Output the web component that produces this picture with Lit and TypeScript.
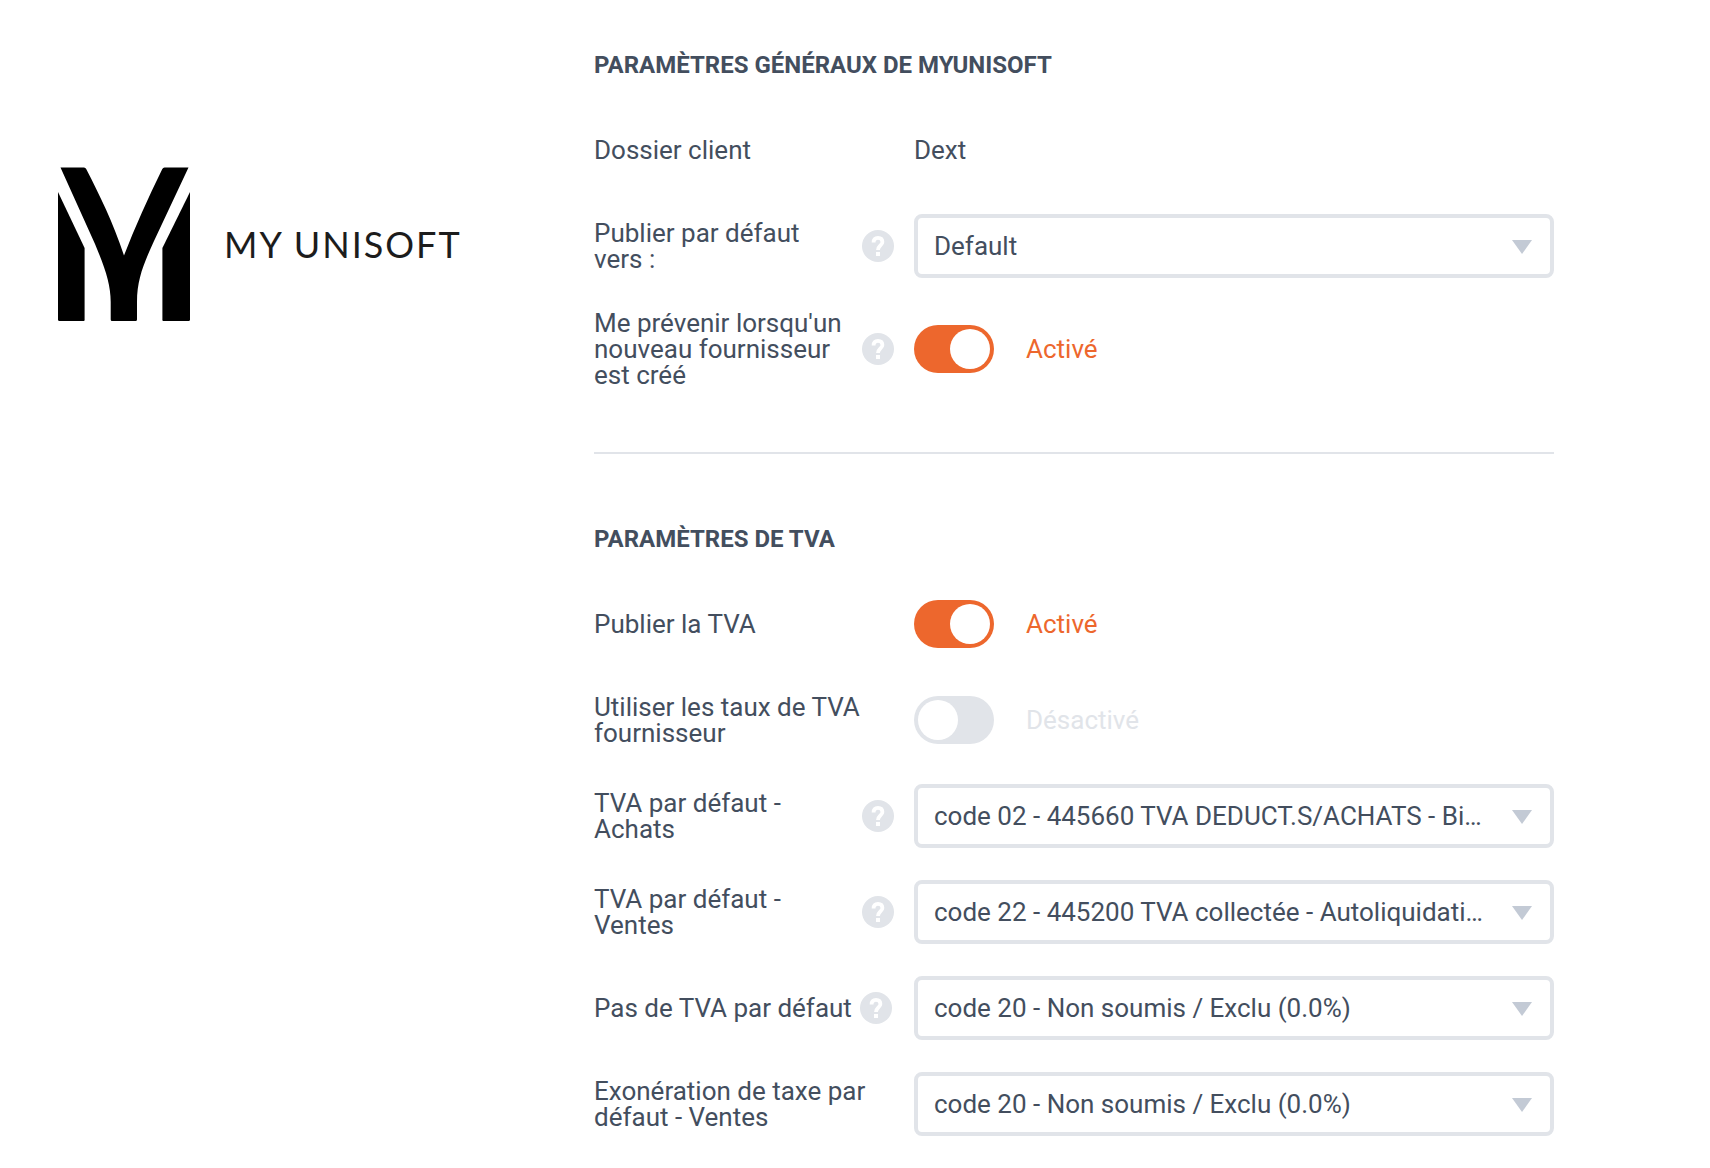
import { LitElement, html, css, svg, nothing } from "lit";
import { customElement, property, state } from "lit/decorators.js";

type Field =
  | { kind: "text"; id: string; label: string; value: string }
  | { kind: "select"; id: string; label: string; help?: string; options: string[] }
  | { kind: "toggle"; id: string; label: string; help?: string; on: boolean };

interface Section {
  title: string;
  fields: Field[];
}

const EXCLU = "code 20 - Non soumis / Exclu (0.0%)";
const ACHATS = "code 02 - 445660 TVA DEDUCT.S/ACHATS - Biens (20.0%)";
const VENTES = "code 22 - 445200 TVA collectée - Autoliquidation (20.0%)";

const SECTIONS: Section[] = [
  {
    title: "PARAMÈTRES GÉNÉRAUX DE MYUNISOFT",
    fields: [
      { kind: "text", id: "client", label: "Dossier client", value: "Dext" },
      { kind: "select", id: "publish", label: "Publier par défaut vers :", help: "Aide", options: ["Default"] },
      { kind: "toggle", id: "notify", label: "Me prévenir lorsqu'un nouveau fournisseur est créé", help: "Aide", on: true },
    ],
  },
  {
    title: "PARAMÈTRES DE TVA",
    fields: [
      { kind: "toggle", id: "vat", label: "Publier la TVA", on: true },
      { kind: "toggle", id: "rates", label: "Utiliser les taux de TVA fournisseur", on: false },
      { kind: "select", id: "purchases", label: "TVA par défaut - Achats", help: "Aide", options: [ACHATS, EXCLU] },
      { kind: "select", id: "sales", label: "TVA par défaut - Ventes", help: "Aide", options: [VENTES, EXCLU] },
      { kind: "select", id: "none", label: "Pas de TVA par défaut", help: "Aide", options: [EXCLU] },
      { kind: "select", id: "exempt", label: "Exonération de taxe par défaut - Ventes", options: [EXCLU] },
    ],
  },
];

@customElement("brand-logo")
export class BrandLogo extends LitElement {
  static styles = css`
    :host {
      display: flex;
      align-items: center;
      gap: 32px;
      color: #000;
    }
    .mark {
      display: block;
      flex: none;
    }
    .name {
      font: 400 36px/48px Lato, sans-serif;
      letter-spacing: 2px;
      color: #1c1c1c;
      white-space: nowrap;
    }
  `;

  render() {
    return html`
      <svg class="mark" width="136" height="156" viewBox="0 0 136 156" fill="currentColor" aria-hidden="true">
        <path d="M2 26 L28.600 82 V154 Q28.600 155 27.600 155 H3.500 Q2 155 2 153.500 Z" />
        <path d="M134 26 L106.400 82 V154 Q106.400 155 107.400 155 H132.500 Q134 155 134 153.500 Z" />
        <path
          d="M4.500 1.500 H28 Q29.500 1.500 30.200 3 C44 30 57 56 68 89.500 C79 61 92 32 106.300 3 Q107 1.500 108.500 1.500 H132.500 L98 75 C88 97 81 113 81 136 V153.500 Q81 155 79.500 155 H56 Q54.700 155 54.700 153.500 V136 C54.700 118 49 102 39 78 Z"
        />
      </svg>
      <span class="name">MY UNISOFT</span>
    `;
  }
}

@customElement("help-button")
export class HelpButton extends LitElement {
  @property() label = "";

  static styles = css`
    :host {
      display: block;
      flex: none;
    }
    .help {
      display: block;
      padding: 0;
      border: 0;
      background: none;
      cursor: pointer;
    }
    .icon {
      display: block;
    }
  `;

  render() {
    return html`
      <button class="help" type="button" aria-label=${this.label}>
        <svg class="icon" width="32" height="32" viewBox="0 0 32 32" aria-hidden="true">
          <circle cx="16" cy="16" r="16" fill="#e1e4e9" />
          <path d="M11.600 12.400 C11.600 9.300 13.400 7.800 16 7.800 C18.700 7.800 20.400 9.400 20.400 11.900 C20.400 15.300 16 15.600 16 20" fill="none" stroke="#fff" stroke-width="3.800" />
          <rect x="14" y="22" width="4" height="4" fill="#fff" />
        </svg>
      </button>
    `;
  }
}

@customElement("app-root")
export class AppRoot extends LitElement {
  @state() private toggles: Record<string, boolean> = Object.fromEntries(
    SECTIONS.flatMap((s) => s.fields).flatMap((f) => (f.kind === "toggle" ? [[f.id, f.on]] : [])),
  );

  static styles = css`
    :host {
      display: block;
      box-sizing: border-box;
      min-height: 100vh;
      background: #fff;
      color: #434e5e;
      font: 400 26px/26px Roboto, "Liberation Sans", sans-serif;
    }
    .page {
      display: grid;
      grid-template-columns: minmax(0, 538fr) minmax(0, 960fr);
      padding: 28px 156px 16px 56px;
    }
    .brand {
      padding-top: 138px;
    }
    .section + .section {
      margin-top: 48px;
      padding-top: 48px;
      border-top: 2px solid #e1e4e9;
    }
    .title {
      margin: 0;
      padding: 24px 0;
      font-size: 24px;
      line-height: 26px;
      font-weight: 700;
    }
    .row {
      display: grid;
      grid-template-columns: minmax(0, 1fr) minmax(0, 2fr);
      align-items: center;
      min-height: 64px;
      padding: 16px 0;
    }
    .caption {
      display: flex;
      align-items: center;
      gap: 8px;
      padding-right: 20px;
    }
    .picker {
      display: grid;
      align-items: center;
    }
    .select {
      grid-area: 1 / 1;
      width: 100%;
      height: 64px;
      padding: 0 64px 0 16px;
      border: 4px solid #e1e4e9;
      border-radius: 8px;
      background: #fff;
      color: inherit;
      font: inherit;
      line-height: 32px;
      appearance: none;
      overflow: hidden;
      text-overflow: ellipsis;
      white-space: nowrap;
      cursor: pointer;
    }
    .arrow {
      grid-area: 1 / 1;
      justify-self: end;
      margin: 2px 22px 0 0;
      pointer-events: none;
    }
    .switch {
      display: flex;
      align-items: center;
      gap: 32px;
    }
    .toggle {
      flex: none;
      display: block;
      box-sizing: border-box;
      width: 80px;
      height: 48px;
      margin: 0;
      padding: 4px;
      border-radius: 24px;
      background: #e1e4e9;
      appearance: none;
      cursor: pointer;
    }
    .toggle::before {
      content: "";
      display: block;
      width: 40px;
      height: 40px;
      border-radius: 50%;
      background: #fff;
    }
    .toggle:checked {
      background: #ed672d;
    }
    .toggle:checked::before {
      margin-left: auto;
    }
    .status {
      color: #e1e4e9;
    }
    .toggle:checked + .status {
      color: #ed672d;
    }
  `;

  private control(f: Field) {
    if (f.kind === "text") return html`<span>${f.value}</span>`;
    if (f.kind === "select") {
      return html`
        <div class="picker">
          <select class="select" id=${f.id}>
            ${f.options.map((o) => html`<option>${o}</option>`)}
          </select>
          <svg class="arrow" width="20" height="14" viewBox="0 0 20 14" aria-hidden="true">
            ${svg`<path d="M0 0H20L10 14Z" fill="#c3cad5" />`}
          </svg>
        </div>
      `;
    }
    const on = this.toggles[f.id];
    return html`
      <div class="switch">
        <input
          class="toggle"
          type="checkbox"
          role="switch"
          id=${f.id}
          .checked=${on}
          @change=${(e: Event) => {
            this.toggles = { ...this.toggles, [f.id]: (e.target as HTMLInputElement).checked };
          }}
        />
        <span class="status">${on ? "Activé" : "Désactivé"}</span>
      </div>
    `;
  }

  private row(f: Field) {
    return html`
      <div class="row">
        <div class="caption">
          ${f.kind === "text" ? html`<span>${f.label}</span>` : html`<label for=${f.id}>${f.label}</label>`}
          ${f.kind !== "text" && f.help ? html`<help-button label=${`${f.help} : ${f.label}`}></help-button>` : nothing}
        </div>
        ${this.control(f)}
      </div>
    `;
  }

  render() {
    return html`
      <main class="page">
        <div class="brand"><brand-logo></brand-logo></div>
        <form>
          ${SECTIONS.map(
            (s) => html`
              <section class="section">
                <h2 class="title">${s.title}</h2>
                ${s.fields.map((f) => this.row(f))}
              </section>
            `,
          )}
        </form>
      </main>
    `;
  }
}
